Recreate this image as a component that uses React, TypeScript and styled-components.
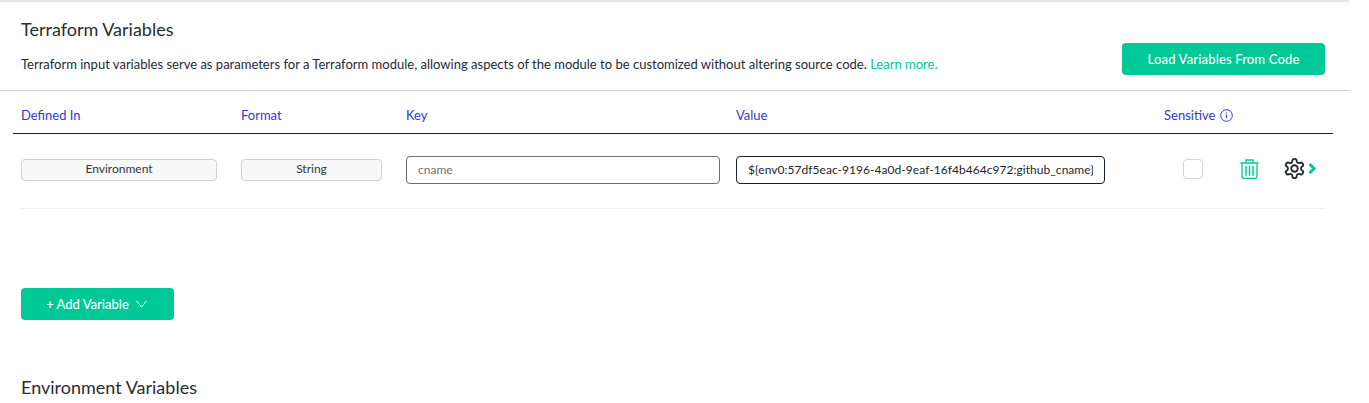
import React from 'react';
import styled, { createGlobalStyle } from 'styled-components';

const GlobalStyle = createGlobalStyle`
  html, body {
    margin: 0;
    padding: 0;
    background: #fff;
  }
  body {
    font-family: Lato, "Open Sans", "Liberation Sans", sans-serif;
    color: #1f2937;
  }
`;

const Page = styled.div`
  width: 1349px;
  height: 403px;
  overflow: hidden;
  border-top: 2px solid #e6e8ea;
  box-sizing: border-box;
`;

const Intro = styled.section`
  height: 89px;
  box-sizing: border-box;
  padding: 17px 24px 0 21px;
  border-bottom: 1px solid #c5d3e0;
  display: flex;
  justify-content: space-between;
`;

const Title = styled.h2`
  margin: 0;
  font-size: 18px;
  line-height: 20px;
  font-weight: 400;
  color: #2a2d31;
`;

const Description = styled.p`
  margin: 15px 0 0;
  font-size: 13px;
  letter-spacing: 0.007px;
  line-height: 20px;
  color: #1e2a3a;
`;

const LearnMore = styled.a`
  color: #00c997;
`;

const GreenButton = styled.button<{ $width: number; $gap?: number }>`
  width: ${(p) => p.$width}px;
  height: 32px;
  border: 0;
  border-radius: 4px;
  background: #00c997;
  color: #fff;
  font-family: inherit;
  font-size: 13px;
  font-weight: 500;
  display: flex;
  align-items: center;
  justify-content: center;
  gap: ${(p) => p.$gap ?? 8}px;
  padding: 0;
`;

const LoadButton = styled(GreenButton)`
  margin-top: 24px;
  letter-spacing: 0.012em;
`;

const Table = styled.div`
  margin: 0 16px 0 13px;
`;

const columns = '220px 165px 330px 428px 1fr';

const HeadRow = styled.div`
  display: grid;
  grid-template-columns: ${columns};
  height: 43px;
  box-sizing: border-box;
  padding: 6px 0 0 8px;
  align-items: center;
  border-bottom: 1px solid #1a1f27;
  font-size: 13px;
  color: #3538d6;
`;

const HeadCell = styled.div`
  display: flex;
  align-items: center;
  gap: 5px;
`;

const Row = styled.div`
  display: grid;
  grid-template-columns: ${columns};
  height: 75px;
  box-sizing: border-box;
  padding-bottom: 3px;
  margin: 0 8px;
  align-items: center;
  border-bottom: 1px solid #eceeef;
`;

const SelectBox = styled.div<{ $width: number }>`
  width: ${(p) => p.$width}px;
  height: 22px;
  box-sizing: border-box;
  border: 1px solid #d2d2d2;
  border-radius: 4px;
  background: #f8f8f8;
  font-size: 12px;
  line-height: 18px;
  text-align: center;
  color: #33373c;
`;

const Field = styled.input<{ $width: number; $dark?: boolean }>`
  width: ${(p) => p.$width}px;
  height: 28px;
  box-sizing: border-box;
  border: 1px solid ${(p) => (p.$dark ? '#14202e' : '#6b6f73')};
  border-radius: 4px;
  padding: 0 11px;
  font-family: inherit;
  font-size: 12px;
  letter-spacing: ${(p) => (p.$dark ? '0.04px' : '0')};
  color: #1f252c;
  background: #fff;
  outline: none;
  &::placeholder {
    color: #6d7074;
    opacity: 1;
  }
`;

const Actions = styled.div`
  display: flex;
  align-items: center;
  padding-bottom: 2px;
`;

const CheckBox = styled.span`
  width: 20px;
  height: 20px;
  box-sizing: border-box;
  margin-left: 19px;
  border: 1px solid #d4d4d4;
  border-radius: 4px;
`;

const TrashSlot = styled.span`
  display: flex;
  margin-left: 37px;
`;

const GearSlot = styled.span`
  display: flex;
  margin-left: 24px;
`;

const ChevronSlot = styled.span`
  display: flex;
  margin-left: 2px;
`;

const AddButton = styled(GreenButton)`
  margin: 79px 0 0 21px;
  padding-right: 2px;
`;

const SectionTitle = styled(Title)`
  margin: 57px 0 0 21px;
`;

const InfoIcon = () => (
  <svg width="13" height="13" viewBox="0 0 13 13" fill="none" stroke="#3538d6">
    <circle cx="6.5" cy="6.5" r="5.8" strokeWidth="1" />
    <path d="M6.5 5.6v3.6M6.5 3.4v1" strokeWidth="1.1" />
  </svg>
);

const TrashIcon = () => (
  <svg width="19" height="20" viewBox="0 0 19 20" fill="none" stroke="#00c997" strokeWidth="1.3">
    <path d="M0.4 4h18.2M6 3.8V1h7v2.8" />
    <path d="M2 4.2v13.4a1.9 1.9 0 0 0 1.9 1.9h11.2a1.9 1.9 0 0 0 1.9-1.9V4.2" />
    <path d="M6 7v9.8M9.5 7v9.8M13 7v9.8" strokeWidth="1.5" />
  </svg>
);

const GearIcon = () => (
  <svg width="23" height="23" viewBox="0 0 24 24" fill="none" stroke="#26282b" strokeWidth="1.9" strokeLinecap="round" strokeLinejoin="round">
    <path d="M12.22 2h-.44a2 2 0 0 0-2 2v.18a2 2 0 0 1-1 1.73l-.43.25a2 2 0 0 1-2 0l-.15-.08a2 2 0 0 0-2.73.73l-.22.38a2 2 0 0 0 .73 2.73l.15.1a2 2 0 0 1 1 1.72v.51a2 2 0 0 1-1 1.74l-.15.09a2 2 0 0 0-.73 2.73l.22.38a2 2 0 0 0 2.73.73l.15-.08a2 2 0 0 1 2 0l.43.25a2 2 0 0 1 1 1.73V20a2 2 0 0 0 2 2h.44a2 2 0 0 0 2-2v-.18a2 2 0 0 1 1-1.73l.43-.25a2 2 0 0 1 2 0l.15.08a2 2 0 0 0 2.73-.73l.22-.39a2 2 0 0 0-.73-2.73l-.15-.08a2 2 0 0 1-1-1.74v-.5a2 2 0 0 1 1-1.74l.15-.09a2 2 0 0 0 .73-2.73l-.22-.38a2 2 0 0 0-2.73-.73l-.15.08a2 2 0 0 1-2 0l-.43-.25a2 2 0 0 1-1-1.73V4a2 2 0 0 0-2-2z" />
    <circle cx="12" cy="12" r="3.4" />
  </svg>
);

const ChevronIcon = () => (
  <svg width="9" height="11" viewBox="0 0 9 11" fill="none" stroke="#00c997" strokeWidth="3">
    <path d="M1.5 1l4.5 4.5L1.5 10" />
  </svg>
);

const CaretIcon = () => (
  <svg width="11" height="8" viewBox="0 0 11 8" fill="none" stroke="#fff" strokeWidth="1">
    <path d="M0.5 0.8L5.5 7l5-6.2" />
  </svg>
);

const App: React.FC = () => (
  <Page>
    <GlobalStyle />
    <Intro>
      <div>
        <Title>Terraform Variables</Title>
        <Description>
          Terraform input variables serve as parameters for a Terraform module, allowing aspects of the module to be customized without altering source code. <LearnMore>Learn more.</LearnMore>
        </Description>
      </div>
      <LoadButton $width={203}>Load Variables From Code</LoadButton>
    </Intro>
    <Table>
      <HeadRow>
        <HeadCell>Defined In</HeadCell>
        <HeadCell>Format</HeadCell>
        <HeadCell>Key</HeadCell>
        <HeadCell>Value</HeadCell>
        <HeadCell>
          Sensitive <InfoIcon />
        </HeadCell>
      </HeadRow>
      <Row>
        <SelectBox $width={196}>Environment</SelectBox>
        <SelectBox $width={141}>String</SelectBox>
        <Field $width={314} placeholder="cname" readOnly />
        <Field $width={369} $dark value="${env0:57df5eac-9196-4a0d-9eaf-16f4b464c972:github_cname}" readOnly />
        <Actions>
          <CheckBox />
          <TrashSlot>
            <TrashIcon />
          </TrashSlot>
          <GearSlot>
            <GearIcon />
          </GearSlot>
          <ChevronSlot>
            <ChevronIcon />
          </ChevronSlot>
        </Actions>
      </Row>
    </Table>
    <AddButton $width={153} $gap={7}>
      + Add Variable <CaretIcon />
    </AddButton>
    <SectionTitle>Environment Variables</SectionTitle>
  </Page>
);

export default App;
